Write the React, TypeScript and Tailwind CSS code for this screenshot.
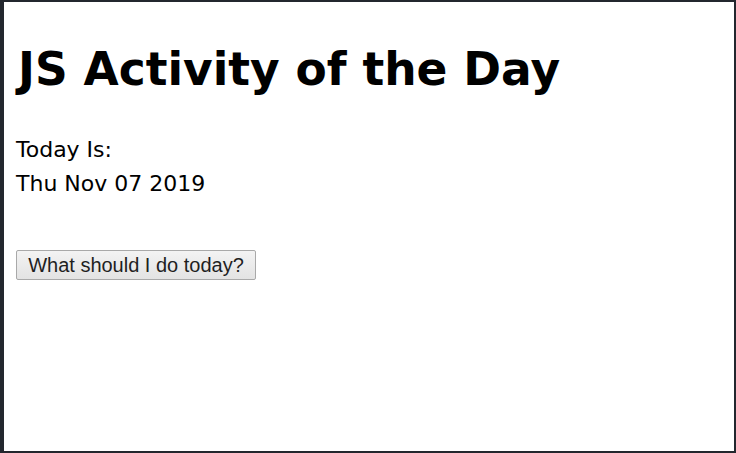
export default function App() {
  return (
    <div className="w-[736px] h-[453px] box-border border-l-4 border-t-2 border-r-2 border-b-2 border-[#23272e] bg-white overflow-hidden">
      <div className="px-3 pt-[38px]" style={{ fontFamily: '"DejaVu Sans", sans-serif' }}>
        <h1 className="pl-[2px] text-[45.5px] leading-[60px] font-bold text-black">JS Activity of the Day</h1>
        <div className="mt-[33px] text-[22px] leading-[34px] text-black">
          <p>Today Is:</p>
          <p>Thu Nov 07 2019</p>
        </div>
        <button
          type="button"
          className="mt-[49px] w-[240px] h-[30px] border border-[#a9a9a9] rounded-[2px] bg-gradient-to-b from-[#f3f3f3] to-[#e3e3e3] text-[20px] text-[#1f1f1f] leading-none"
          style={{ fontFamily: '"Liberation Sans", Arial, sans-serif' }}
        >
          What should I do today?
        </button>
      </div>
    </div>
  );
}
